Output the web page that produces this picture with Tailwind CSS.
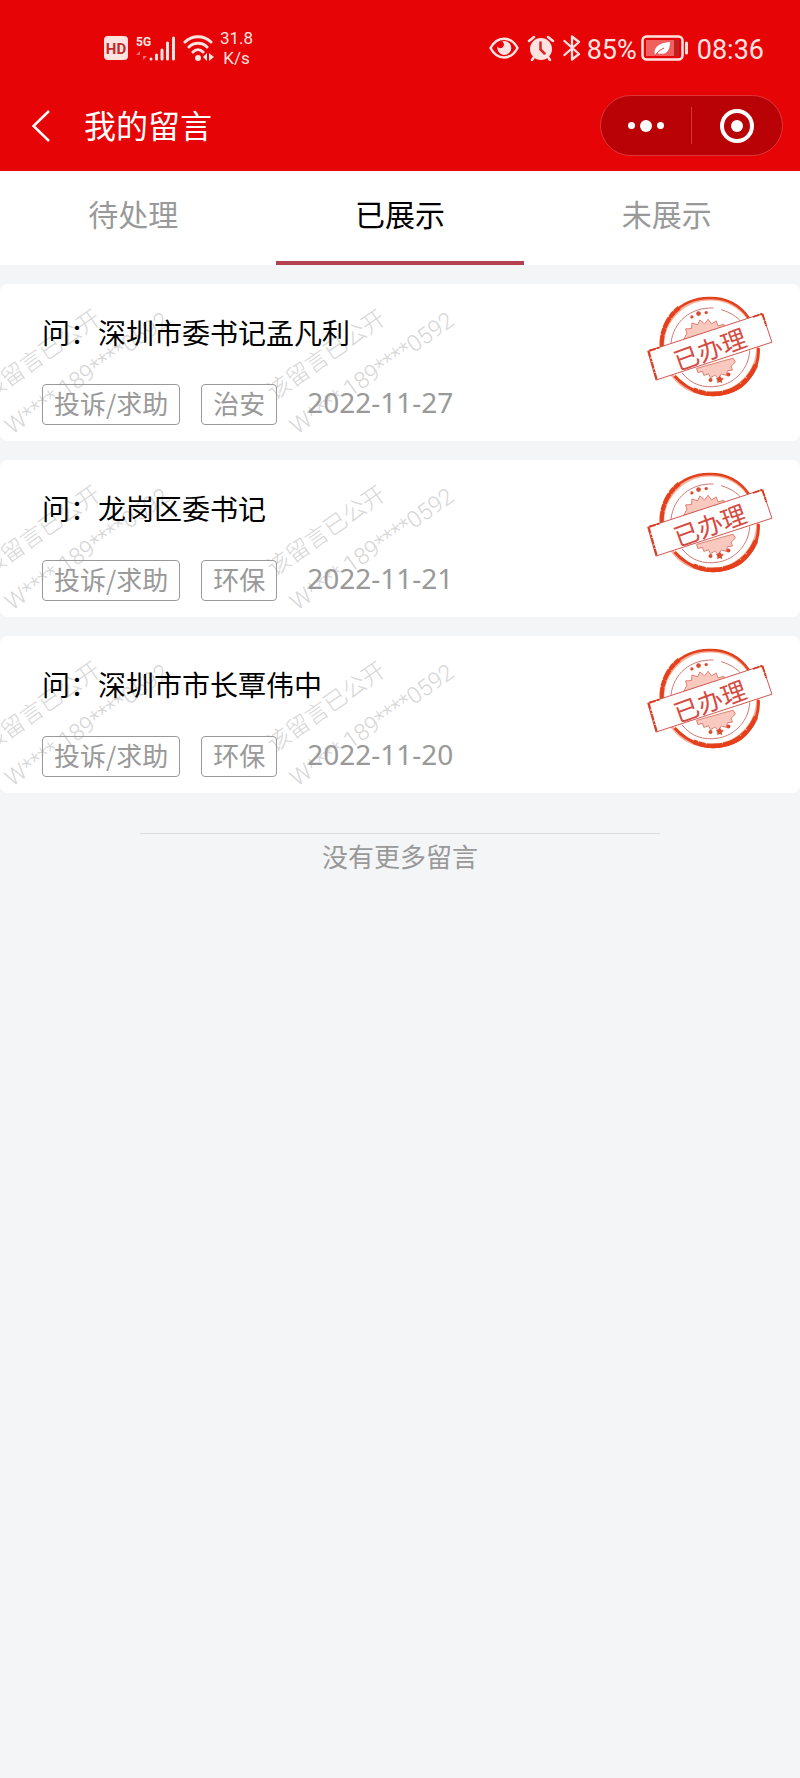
<!DOCTYPE html>
<html lang="zh-CN">
<head>
<meta charset="utf-8">
<meta name="viewport" content="width=device-width, initial-scale=1">
<title>我的留言</title>
<script src="https://cdn.jsdelivr.net/npm/@tailwindcss/browser@4"></script>
</head>
<body class="min-h-screen bg-[#f4f5f7] font-['Noto_Sans_CJK_SC',sans-serif]">

<!-- Shared drawings -->
<svg class="hidden" aria-hidden="true">
  <symbol id="stamp" viewBox="45 45 395 310">
    <circle cx="243" cy="200" r="143" fill="none" stroke="#f5b39f" stroke-width="9"/>
    <path d="M98 218C86 125 150 55 240 54c55-1 95 24 120 62" fill="none" stroke="#e5401c" stroke-width="8"/>
    <path d="M97 200C95 150 118 108 150 83" fill="none" stroke="#e5401c" stroke-width="13" stroke-dasharray="34 3 18 2"/>
    <path d="M388 205c4 60-35 118-92 134-60 17-118-4-160-50" fill="none" stroke="#e5401c" stroke-width="9"/>
    <path d="M381 255c-22 50-62 83-118 87-32 2-52-4-70-12" fill="none" stroke="#e5401c" stroke-width="14" stroke-dasharray="48 3 22 2 60 2"/>
    <path d="M125 190c8-65 58-108 128-106M276 89c34 10 57 28 72 52M362 212c-2 52-42 98-94 107-45 8-82-5-110-40" fill="none" stroke="#cf7773" stroke-width="3"/>
    <g fill="#f9c8bf" stroke="#dd8072" stroke-width="3" stroke-linejoin="round">
      <path d="M164 178l9-18-4-13 18-1 1-17 17 6 7-15 14 12 11-14 10 14 14-9 6 15 17-5 2 15 16 4-5 14z"/>
      <path d="M202 266l4 12 14-3 4 12 14-5 6 12 13-8 10 10 10-13 15 4 3-14 15-2-4-12 13-12-7-12z"/>
    </g>
    <g fill="#dc4a30">
      <circle cx="208" cy="101" r="7"/><circle cx="188" cy="111" r="5"/><circle cx="231" cy="98" r="5"/>
      <path d="M272 287l4 7 8 2-6 6 1 8-7-3-8 3 1-8-5-6 8-2z"/><circle cx="244" cy="301" r="6"/><circle cx="298" cy="284" r="6"/>
    </g>
    <path d="M55 214L400 101l29 86L80 301z" fill="#fff" stroke="#d0564c" stroke-width="3"/>
    <path d="M58 214l24 85M400 102l12 36M60 213l30-10M372 111l27-9" fill="none" stroke="#dc3d28" stroke-width="6" stroke-dasharray="20 3 9 2"/>
    <text x="243" y="237" text-anchor="middle" transform="rotate(-20 243 210)" font-size="75" fill="#d64a42" font-family="Noto Sans CJK SC, sans-serif">已办理</text>
  </symbol>
  <symbol id="watermark" viewBox="0 0 480 157">
    <g fill="#d6d6d6" font-size="23">
      <g transform="translate(12 151) rotate(-35)">
        <text x="1" y="-41" font-family="Noto Sans CJK SC, sans-serif" font-weight="300">该留言已公开</text>
        <text font-family="Roboto, sans-serif" font-weight="300">W**** 189****0592</text>
      </g>
      <g transform="translate(297 151) rotate(-35)">
        <text x="1" y="-41" font-family="Noto Sans CJK SC, sans-serif" font-weight="300">该留言已公开</text>
        <text font-family="Roboto, sans-serif" font-weight="300">W**** 189****0592</text>
      </g>
    </g>
  </symbol>
</svg>

<header class="bg-[#e60406] text-white">
  <div class="flex h-20 items-center justify-between pt-4 pr-9 pl-[104px] font-['Roboto',sans-serif] text-[#ffe3e1]">
    <div class="flex items-center">
      <svg class="h-6 w-6" viewBox="0 0 24 24" role="img" aria-label="HD">
        <rect width="24" height="24" rx="4" fill="#ffe3e1"/>
        <text x="12" y="18" text-anchor="middle" font-family="Roboto, sans-serif" font-weight="700" font-size="15" fill="#c2272b">HD</text>
      </svg>
      <svg class="ml-2 h-[27px] w-10" viewBox="0 0 40 27" role="img" aria-label="5G 信号">
        <text x="0" y="11" font-family="Roboto, sans-serif" font-weight="700" font-size="12" fill="#ffe3e1">5G</text>
        <path d="M4 25v-9l-4 4h4zM7 16v9l4-4H7z" fill="#f5716f"/>
        <g stroke="#ffe3e1" stroke-width="3" stroke-linecap="round"><path d="M15 24v0M20.500 24v-4M26 24v-9M31.500 24V8M37.500 24V3"/></g>
      </svg>
      <svg class="ml-[7px] h-7 w-8" viewBox="0 0 32 28" role="img" aria-label="Wi-Fi">
        <g fill="none" stroke="#ffe3e1" stroke-width="3" stroke-linecap="round"><path d="M2 8c7-7 19-7 26 0M6 13c5-5 13-5 18 0M10 18c3-3 7-3 10 0"/></g>
        <circle cx="15" cy="24" r="3" fill="#ffe3e1"/>
        <path d="M24 19v8l-4-4zM26 19v8l5-4z" fill="#ffe3e1"/>
      </svg>
      <div class="ml-[5px] text-center text-[17px] leading-5">31.8<br>K/s</div>
    </div>
    <div class="flex items-center text-[27px] leading-8">
      <svg class="h-6 w-[30px]" viewBox="0 0 30 24" role="img" aria-label="护眼模式">
        <path d="M1.500 12C8-.5 22-.5 28.500 12 22 24.500 8 24.500 1.500 12z" fill="none" stroke="#ffe3e1" stroke-width="2.500"/>
        <path d="M15 5a7 7 0 1 1-6.500 5.500c1 2 4.500 2.500 5.800 0C15.500 8.500 15 6.500 13 5.500z" fill="#ffe3e1"/>
      </svg>
      <svg class="ml-2 h-[26px] w-7" viewBox="0 0 28 26" role="img" aria-label="闹钟">
        <circle cx="14" cy="14" r="11" fill="#ffe3e1"/>
        <path d="M2 6l5-4M26 6l-5-4M7 22l-2 3M21 22l2 3" stroke="#ffe3e1" stroke-width="2.500" stroke-linecap="round"/>
        <path d="M13.500 7.500v7l4 4" fill="none" stroke="#dd2025" stroke-width="2.500" stroke-linecap="round"/>
      </svg>
      <svg class="ml-2 h-[26px] w-[18px]" viewBox="0 0 18 26" role="img" aria-label="蓝牙">
        <path d="M1.500 6L16 19l-7 5.500v-23L16 7 1.500 20" fill="none" stroke="#ffe3e1" stroke-width="2.300" stroke-linejoin="round" stroke-linecap="round"/>
      </svg>
      <span class="ml-[6px] pt-1">85%</span>
      <svg class="ml-1 h-[26px] w-12" viewBox="0 0 48 26" role="img" aria-label="电池">
        <rect x="1.500" y="1.500" width="40" height="23" rx="4" fill="none" stroke="#ffe3e1" stroke-width="2.500"/>
        <rect x="5" y="5" width="28" height="16" fill="#f0605f"/><rect x="33" y="5" width="5" height="16" fill="#c01f24"/>
        <path d="M14 20c-2-8 4-12 15-13 0 9-4 14-13 11z" fill="#fff"/><path d="M14 21c2-4 5-6 9-8" fill="none" stroke="#c9494a"/>
        <path d="M45.500 8v10" stroke="#ffe3e1" stroke-width="3" stroke-linecap="round"/>
      </svg>
      <time class="ml-2 pt-1">08:36</time>
    </div>
  </div>
  <nav class="flex h-[91px] items-center pr-[17px] pl-8">
    <button type="button" aria-label="返回" class="flex h-9 w-5 items-center">
      <svg class="h-8 w-[18px]" viewBox="0 0 18 32" fill="none" stroke="#fff" stroke-width="2.500"><path d="M17 1L1.500 16 17 31"/></svg>
    </button>
    <h1 class="ml-8 flex-1 pb-1 text-[32px] leading-10">我的留言</h1>
    <div class="flex h-[61px] w-[183px] items-center rounded-full border border-[#e03639] bg-[#b80206]">
      <button type="button" aria-label="更多" class="flex h-full flex-1 items-center justify-center gap-[5px]">
        <span class="size-[7px] rounded-full bg-white"></span>
        <span class="size-3 rounded-full bg-white"></span>
        <span class="size-[7px] rounded-full bg-white"></span>
      </button>
      <span class="h-[37px] w-px bg-[#d93538]"></span>
      <button type="button" aria-label="关闭" class="flex h-full flex-1 items-center justify-center">
        <span class="flex size-[34px] items-center justify-center rounded-full border-4 border-white"><span class="size-3 rounded-full bg-white"></span></span>
      </button>
    </div>
  </nav>
</header>

<div role="tablist" class="grid h-[94px] grid-cols-3 bg-white text-[30px] leading-10 text-[#999]">
  <button type="button" role="tab" aria-selected="false" class="flex flex-col items-center pt-[22px]">待处理</button>
  <button type="button" role="tab" aria-selected="true" class="flex flex-col items-center justify-between px-[9px] pt-[22px] text-black">已展示<span class="h-1 w-full bg-[#b5414e]"></span></button>
  <button type="button" role="tab" aria-selected="false" class="flex flex-col items-center pt-[22px]">未展示</button>
</div>

<main class="pt-[19px]">
  <ul class="flex flex-col gap-[19px]">
    <li class="relative isolate flex items-start justify-between overflow-hidden rounded-lg bg-white pr-6 pb-4 pl-[42px]">
      <svg class="absolute top-0 left-0 -z-10 h-[157px] w-[480px]" aria-hidden="true"><use href="#watermark"/></svg>
      <div class="pt-7">
        <h2 class="text-[28px] leading-10">问：深圳市委书记孟凡利</h2>
        <div class="mt-8 flex items-center text-[26px] leading-[35px] text-[#999]">
          <span class="rounded border border-[#999] px-[11px] pb-1">投诉/求助</span>
          <span class="ml-[21px] rounded border border-[#999] px-[11px] pb-1">治安</span>
          <time class="ml-[30px] pb-1 font-['Noto_Sans',sans-serif] text-[28px]">2022-11-27</time>
        </div>
      </div>
      <svg class="mt-[11px] h-[103px] w-[132px]" role="img" aria-label="已办理"><use href="#stamp"/></svg>
    </li>
    <li class="relative isolate flex items-start justify-between overflow-hidden rounded-lg bg-white pr-6 pb-4 pl-[42px]">
      <svg class="absolute top-0 left-0 -z-10 h-[157px] w-[480px]" aria-hidden="true"><use href="#watermark"/></svg>
      <div class="pt-7">
        <h2 class="text-[28px] leading-10">问：龙岗区委书记</h2>
        <div class="mt-8 flex items-center text-[26px] leading-[35px] text-[#999]">
          <span class="rounded border border-[#999] px-[11px] pb-1">投诉/求助</span>
          <span class="ml-[21px] rounded border border-[#999] px-[11px] pb-1">环保</span>
          <time class="ml-[30px] pb-1 font-['Noto_Sans',sans-serif] text-[28px]">2022-11-21</time>
        </div>
      </div>
      <svg class="mt-[11px] h-[103px] w-[132px]" role="img" aria-label="已办理"><use href="#stamp"/></svg>
    </li>
    <li class="relative isolate flex items-start justify-between overflow-hidden rounded-lg bg-white pr-6 pb-4 pl-[42px]">
      <svg class="absolute top-0 left-0 -z-10 h-[157px] w-[480px]" aria-hidden="true"><use href="#watermark"/></svg>
      <div class="pt-7">
        <h2 class="text-[28px] leading-10">问：深圳市市长覃伟中</h2>
        <div class="mt-8 flex items-center text-[26px] leading-[35px] text-[#999]">
          <span class="rounded border border-[#999] px-[11px] pb-1">投诉/求助</span>
          <span class="ml-[21px] rounded border border-[#999] px-[11px] pb-1">环保</span>
          <time class="ml-[30px] pb-1 font-['Noto_Sans',sans-serif] text-[28px]">2022-11-20</time>
        </div>
      </div>
      <svg class="mt-[11px] h-[103px] w-[132px]" role="img" aria-label="已办理"><use href="#stamp"/></svg>
    </li>
  </ul>
  <p class="mx-auto mt-10 w-[65%] border-t border-[#dcdddf] pt-0.5 text-center text-[26px] leading-10 text-[#999]">没有更多留言</p>
</main>
</body>
</html>
